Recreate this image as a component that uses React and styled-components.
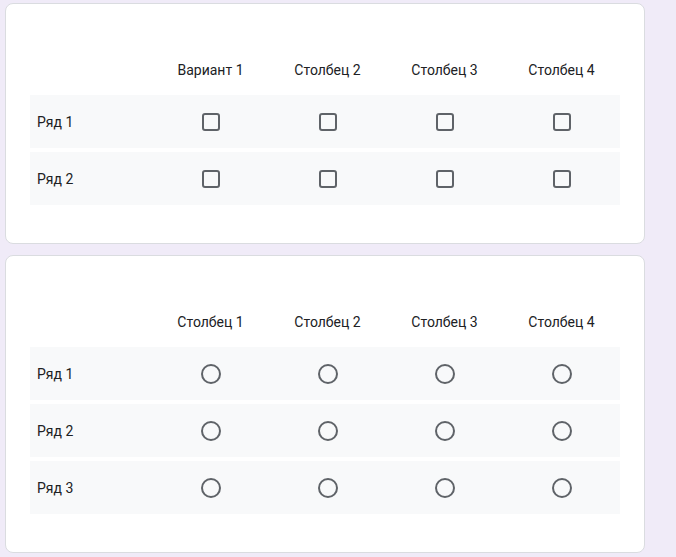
import React from 'react'
import styled, { createGlobalStyle } from 'styled-components'

const GlobalStyle = createGlobalStyle`
  html, body {
    margin: 0;
    background: #f0ebf8;
    font-family: Roboto, Arial, sans-serif;
    color: #202124;
  }
`

const Page = styled.div`
  display: flex;
  flex-direction: column;
  gap: 11px;
  padding: 3px 0 0 5px;
`

const Card = styled.div`
  width: 640px;
  box-sizing: border-box;
  background: #fff;
  border: 1px solid #dadce0;
  border-radius: 8px;
  padding: 24px 24px 38px;
`

const Grid = styled.div`
  display: flex;
  flex-direction: column;
  gap: 4px;
`

const Row = styled.div`
  display: grid;
  grid-template-columns: 122px repeat(4, 117px);
  align-items: ${p => (p.$head ? 'end' : 'center')};
  height: ${p => (p.$head ? '63px' : '53px')};
  padding-bottom: ${p => (p.$head ? '13px' : '0')};
  box-sizing: border-box;
  background: ${p => (p.$head ? 'transparent' : '#f8f9fa')};
`

const Label = styled.div`
  font-size: 14px;
  padding-left: 7px;
`

const Head = styled.div`
  font-size: 14px;
  text-align: center;
`

const Cell = styled.div`
  display: flex;
  justify-content: center;
`

const Checkbox = styled.span`
  width: 18px;
  height: 18px;
  box-sizing: border-box;
  border: 2px solid #5f6368;
  border-radius: 3px;
`

const Radio = styled.span`
  width: 20px;
  height: 20px;
  box-sizing: border-box;
  border: 2px solid #5f6368;
  border-radius: 50%;
`

function Matrix({ columns, rows, Control }) {
  return (
    <Card>
      <Grid>
        <Row $head>
          <div />
          {columns.map(c => <Head key={c}>{c}</Head>)}
        </Row>
        {rows.map(r => (
          <Row key={r}>
            <Label>{r}</Label>
            {columns.map(c => (
              <Cell key={c}><Control /></Cell>
            ))}
          </Row>
        ))}
      </Grid>
    </Card>
  )
}

export default function App() {
  return (
    <>
      <GlobalStyle />
      <Page>
        <Matrix
          columns={['Вариант 1', 'Столбец 2', 'Столбец 3', 'Столбец 4']}
          rows={['Ряд 1', 'Ряд 2']}
          Control={Checkbox}
        />
        <Matrix
          columns={['Столбец 1', 'Столбец 2', 'Столбец 3', 'Столбец 4']}
          rows={['Ряд 1', 'Ряд 2', 'Ряд 3']}
          Control={Radio}
        />
      </Page>
    </>
  )
}
